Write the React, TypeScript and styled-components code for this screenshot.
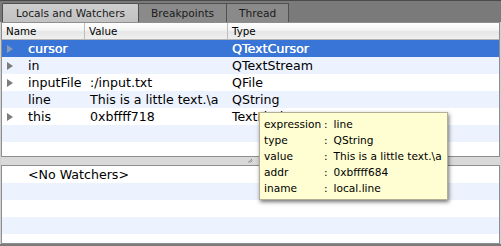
import React from 'react';
import styled, { createGlobalStyle } from 'styled-components';

const GlobalStyle = createGlobalStyle`
  html, body {
    margin: 0;
    padding: 0;
    background: #cfcfcf;
  }
  body {
    font-family: "DejaVu Sans", "Liberation Sans", sans-serif;
  }
`;

const Frame = styled.div`
  position: relative;
  width: 501px;
  height: 246px;
  display: flex;
  flex-direction: column;
  background: #d2d2d2;
  border-bottom: 2px solid #7a7a7a;
  box-sizing: border-box;
  overflow: hidden;
`;

const TabBar = styled.div`
  height: 22px;
  display: flex;
  align-items: flex-end;
  padding-left: 2px;
  background: #7a7a7a;
  border-top: 1px solid #4a4a4a;
  box-sizing: border-box;
  flex-shrink: 0;
`;

const Tab = styled.div<{ active?: boolean }>`
  height: 19px;
  display: flex;
  align-items: center;
  padding: 0 ${({ active }) => (active ? '13px' : '12px')};
  font-size: 10.6px;
  color: #1a1a1a;
  background: ${({ active }) =>
    active ? 'linear-gradient(#cdcdcd, #c2c2c2)' : '#8a8a8a'};
  border: 1px solid #505050;
  border-bottom: none;
  border-left: ${({ active }) => (active ? '1px solid #505050' : 'none')};
  box-sizing: border-box;
  ${({ active }) => active && 'border-radius: 2px 2px 0 0;'}
`;

const Body = styled.div`
  flex: 1;
  display: flex;
  flex-direction: column;
  padding: 0 1px;
`;

const Pane = styled.div<{ h: number }>`
  height: ${({ h }) => h}px;
  flex-shrink: 0;
  border: 1px solid #8e8e8e;
  background: #fff;
  box-sizing: border-box;
  overflow: hidden;
  display: flex;
  flex-direction: column;
`;

const COLS = '83px 143px 1fr';

const HeaderRow = styled.div`
  display: grid;
  grid-template-columns: ${COLS};
  height: 17px;
  flex-shrink: 0;
  background: linear-gradient(#ffffff 0%, #f4f4f4 45%, #e6e6e6 55%, #f0f0f0 100%);
  border-bottom: 1px solid #b4b4b4;
  box-sizing: border-box;
`;

const HeaderCell = styled.div`
  display: flex;
  align-items: center;
  padding-left: 4px;
  font-size: 10.3px;
  color: #000;
  border-right: 1px solid #bdbdbd;
  &:last-child {
    border-right: none;
  }
`;

const Row = styled.div<{ tone: 'sel' | 'alt' | 'plain' }>`
  display: grid;
  grid-template-columns: ${COLS};
  height: 17px;
  flex-shrink: 0;
  background: ${({ tone }) =>
    tone === 'sel' ? '#3875d7' : tone === 'alt' ? '#edf3fe' : '#ffffff'};
  color: ${({ tone }) => (tone === 'sel' ? '#ffffff' : '#000000')};
  font-size: 12.6px;
  ${({ tone }) => tone === 'sel' && 'text-shadow: 0.3px 0 0 #fff;'}
`;

const Cell = styled.div<{ indent?: number; wide?: boolean }>`
  display: flex;
  align-items: center;
  padding-left: ${({ indent }) => indent ?? 5}px;
  white-space: nowrap;
  overflow: hidden;
  ${({ wide }) => wide && 'grid-column: 1 / -1;'}
`;

const Arrow = styled.svg`
  flex-shrink: 0;
  width: 8px;
  height: 10px;
  margin-right: 14px;
`;

const ArrowSlot = styled.span`
  width: 8px;
  margin-right: 14px;
  flex-shrink: 0;
`;

const Splitter = styled.div`
  height: 8px;
  flex-shrink: 0;
  display: flex;
  justify-content: center;
  align-items: center;
  background: #d9d9d9;
`;

const Grip = styled.svg`
  width: 5px;
  height: 4px;
`;

const Tooltip = styled.div`
  position: absolute;
  left: 259px;
  top: 112px;
  width: 189px;
  padding: 3px 0 3px 4px;
  box-sizing: border-box;
  background: #fefed2;
  border: 1px solid #b0b09a;
  box-shadow: 1px 2px 4px rgba(0, 0, 0, 0.55);
  display: grid;
  grid-template-columns: 60px 1fr;
  grid-auto-rows: 16px;
  font-size: 10.6px;
  color: #000;
`;

const TipLabel = styled.div`
  display: flex;
  align-items: center;
  white-space: nowrap;
`;

const TipValue = styled.div`
  display: flex;
  align-items: center;
  white-space: nowrap;
  gap: 6px;
`;

type Local = { name: string; value: string; type: string; expandable: boolean };

const locals: Local[] = [
  { name: 'cursor', value: '', type: 'QTextCursor', expandable: true },
  { name: 'in', value: '', type: 'QTextStream', expandable: true },
  { name: 'inputFile', value: ':/input.txt', type: 'QFile', expandable: true },
  { name: 'line', value: 'This is a little text.\\a', type: 'QString', expandable: false },
  { name: 'this', value: '0xbffff718', type: 'TextFinder *', expandable: true },
];

const tip: [string, string][] = [
  ['expression', 'line'],
  ['type', 'QString'],
  ['value', 'This is a little text.\\a'],
  ['addr', '0xbffff684'],
  ['iname', 'local.line'],
];

const toneFor = (i: number, selected: number): 'sel' | 'alt' | 'plain' =>
  i === selected ? 'sel' : i % 2 === 1 ? 'alt' : 'plain';

const Triangle = ({ color }: { color: string }) => (
  <Arrow viewBox="0 0 8 10">
    <polygon points="1,1 7,5 1,9" fill={color} />
  </Arrow>
);

export default function App() {
  return (
    <>
      <GlobalStyle />
      <Frame>
        <TabBar>
          <Tab active>Locals and Watchers</Tab>
          <Tab>Breakpoints</Tab>
          <Tab>Thread</Tab>
        </TabBar>
        <Body>
          <Pane h={135}>
            <HeaderRow>
              <HeaderCell>Name</HeaderCell>
              <HeaderCell>Value</HeaderCell>
              <HeaderCell>Type</HeaderCell>
            </HeaderRow>
            {locals.map((l, i) => (
              <Row key={l.name} tone={toneFor(i, 0)}>
                <Cell indent={4}>
                  {l.expandable ? (
                    <Triangle color={i === 0 ? '#8c9ab3' : '#7c7c7c'} />
                  ) : (
                    <ArrowSlot />
                  )}
                  {l.name}
                </Cell>
                <Cell>{l.value}</Cell>
                <Cell indent={4}>{l.type}</Cell>
              </Row>
            ))}
            {[5, 6].map((i) => (
              <Row key={i} tone={toneFor(i, 0)} />
            ))}
          </Pane>
          <Splitter>
            <Grip viewBox="0 0 5 4">
              <path d="M0 3.5 L4 0" stroke="#8a8a8a" strokeWidth="1" />
              <path d="M2 3.5 L4.5 1.5" stroke="#8a8a8a" strokeWidth="1" />
            </Grip>
          </Splitter>
          <Pane h={79}>
            <Row tone="plain">
              <Cell indent={26} wide>
                &lt;No Watchers&gt;
              </Cell>
            </Row>
            {[1, 2, 3, 4].map((i) => (
              <Row key={i} tone={toneFor(i, -1)} />
            ))}
          </Pane>
        </Body>
        <Tooltip>
          {tip.map(([k, v]) => (
            <React.Fragment key={k}>
              <TipLabel>{k}</TipLabel>
              <TipValue>
                <span>:</span>
                <span>{v}</span>
              </TipValue>
            </React.Fragment>
          ))}
        </Tooltip>
      </Frame>
    </>
  );
}
